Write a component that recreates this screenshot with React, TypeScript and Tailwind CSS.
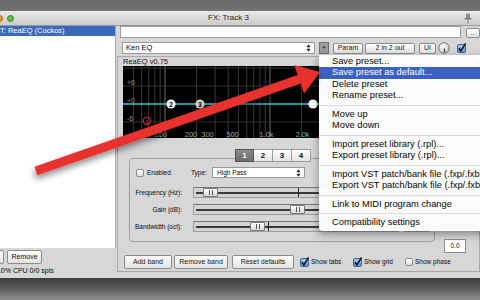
import React from "react";

function UpDown() {
  return (
    <svg width="5" height="8" viewBox="0 0 5 8" className="shrink-0">
      <path d="M2.5 0.3 L4.6 3.2 L0.4 3.2 Z M2.5 7.7 L4.6 4.8 L0.4 4.8 Z" fill="#2a2a2a" />
    </svg>
  );
}

function Btn({ children, className = "" }: { children?: React.ReactNode; className?: string }) {
  return (
    <div
      className={`flex items-center justify-center whitespace-nowrap border border-[#8c8c8c] rounded-[2px] bg-linear-to-b from-[#fefefe] to-[#e3e3e3] text-[#111] ${className}`}
    >
      {children}
    </div>
  );
}

function CheckOn() {
  return (
    <svg width="9" height="9" viewBox="0 0 9 9" className="shrink-0 overflow-visible">
      <defs>
        <linearGradient id="cb" x1="0" y1="0" x2="0" y2="1">
          <stop offset="0" stopColor="#a9cdf5" />
          <stop offset="1" stopColor="#5a93db" />
        </linearGradient>
      </defs>
      <rect x="0.5" y="0.5" width="8" height="8" rx="1.5" fill="url(#cb)" stroke="#3d639e" />
      <path d="M1.8 4.2 L3.9 7 L8.6 -0.6" stroke="#101010" strokeWidth="1.5" fill="none" />
    </svg>
  );
}

function CheckOff() {
  return (
    <div className="w-[8px] h-[8px] shrink-0 rounded-[2px] border border-[#8e8e8e] bg-linear-to-b from-[#ffffff] to-[#e0e0e0]" />
  );
}

function Slider({ thumb, tick }: { thumb: number; tick: number }) {
  return (
    <div className="relative flex-1 h-full border border-[#9c9c9c] border-t-[#777] bg-[#d3d3d3]">
      <div className="absolute left-[2px] right-[2px] top-[4px] h-[2px] bg-[#3a3a3a]" />
      <div className="absolute top-0 bottom-0 w-px bg-[#1e1e1e]" style={{ left: tick }} />
      <div
        className="absolute top-[0px] h-[9px] w-[15px] border border-[#7a7a7a] rounded-[1px] bg-linear-to-b from-[#ffffff] to-[#d8d8d8] flex items-center justify-center gap-[2px]"
        style={{ left: thumb }}
      >
        <div className="w-px h-[5px] bg-[#555]" />
        <div className="w-px h-[5px] bg-[#555]" />
      </div>
    </div>
  );
}

function SliderRow({ label, thumb, tick, mt }: { label: string; thumb: number; tick: number; mt: string }) {
  return (
    <div className={`flex items-center h-[11px] ${mt}`}>
      <div className="w-[46px] flex justify-end whitespace-nowrap text-[6.5px] text-[#0a0a0a]">{label}</div>
      <div className="ml-[11px] flex-1 h-[11px] flex">
        <Slider thumb={thumb} tick={tick} />
      </div>
      <div className="ml-[5px] mr-[4px] w-[26px] h-[11px] bg-white border border-[#999]" />
    </div>
  );
}

const gridFreqs = [50, 60, 70, 80, 90, 100, 200, 300, 400, 500, 600, 700, 800, 900, 1000, 2000, 3000, 4000, 5000, 6000, 7000, 8000, 9000, 10000, 20000];
const major = [100, 1000, 10000];
const fx = (f: number) => 42 + 105 * Math.log10(f / 100);
const fLabels: [number, string][] = [
  [38, "100"],
  [68, "200"],
  [84.5, "300"],
  [109.5, "500"],
  [143.5, "1.0k"],
  [179.5, "2.0k"],
  [219, "5.0k"],
  [250, "10k"],
];

function Graph() {
  return (
    <svg width="346" height="72" viewBox="0 0 346 72" className="block">
      <rect width="346" height="72" fill="#000" />
      {gridFreqs.map((f) => (
        <line key={f} x1={fx(f)} x2={fx(f)} y1="0" y2="72" stroke={major.includes(f) ? "#6c6c6c" : "#3a3a3a"} strokeWidth="1" />
      ))}
      {[2, 20, 56].map((y) => (
        <line key={y} x1="0" x2="346" y1={y} y2={y} stroke="#343434" strokeWidth="1" />
      ))}
      {[
        [17, "+6"],
        [35, "+0"],
        [53, "-6"],
      ].map(([y, t]) => (
        <text key={t as string} x="4" y={(y as number) + 2} fontSize="7" fill="#8c8c8c" fontFamily="Liberation Sans, Arial, sans-serif">
          {t}
        </text>
      ))}
      {fLabels.map(([x, t]) => (
        <text key={t} x={x} y="71" fontSize="7.5" fill="#a0a0a0" textAnchor="middle" fontFamily="Liberation Sans, Arial, sans-serif">
          {t}
        </text>
      ))}
      <line x1="0" x2="346" y1="38" y2="38" stroke="#3cc3cf" strokeWidth="1.6" />
      <circle cx="24" cy="55" r="3.8" fill="none" stroke="#d42a2a" strokeWidth="1" />
      <text x="24" y="57.5" fontSize="6" fill="#d42a2a" textAnchor="middle" fontFamily="Liberation Sans, Arial, sans-serif">1</text>
      <circle cx="48" cy="38" r="4.6" fill="#ffffff" />
      <text x="48" y="40.5" fontSize="7" fontWeight="bold" fill="#000" textAnchor="middle" fontFamily="Liberation Sans, Arial, sans-serif">2</text>
      <circle cx="77" cy="38" r="4.6" fill="#cfcfcf" />
      <text x="77" y="40.5" fontSize="7" fontWeight="bold" fill="#000" textAnchor="middle" fontFamily="Liberation Sans, Arial, sans-serif">3</text>
      <circle cx="190" cy="38" r="4.6" fill="#ffffff" />
    </svg>
  );
}

function Knob() {
  return (
    <svg width="12" height="12" viewBox="0 0 12 12" className="shrink-0">
      <defs>
        <radialGradient id="kn" cx="0.4" cy="0.35" r="0.7">
          <stop offset="0" stopColor="#ffffff" />
          <stop offset="1" stopColor="#c4c4c4" />
        </radialGradient>
      </defs>
      <circle cx="6" cy="6" r="5.3" fill="url(#kn)" stroke="#6e6e6e" strokeWidth="0.9" />
      <line x1="6.2" y1="6.5" x2="6.8" y2="10.6" stroke="#2a2a2a" strokeWidth="1" />
    </svg>
  );
}

const menuItems: (string | null)[] = [
  "Save preset...",
  "Save preset as default...",
  "Delete preset",
  "Rename preset...",
  null,
  "Move up",
  "Move down",
  null,
  "Import preset library (.rpl)...",
  "Export preset library (.rpl)...",
  null,
  "Import VST patch/bank file (.fxp/.fxb)...",
  "Export VST patch/bank file (.fxp/.fxb)...",
  null,
  "Link to MIDI program change",
  null,
  "Compatibility settings",
];

export default function App() {
  return (
    <div className="relative w-[480px] h-[300px] overflow-hidden bg-[#d7d7d7] font-['Liberation_Sans',Arial,sans-serif]">
      {/* top strip */}
      <div className="h-[11px] bg-linear-to-b from-[#666666] to-[#737373]" />
      {/* title bar */}
      <div className="h-[15px] flex items-center bg-linear-to-b from-[#ebebeb] to-[#cbcbcb] border-b border-[#9a9a9a]">
        <div className="-ml-[4px] w-[7px] h-[7px] rounded-full bg-[#e79a33] border border-[#b06a18]" />
        <div className="ml-[4px] w-[7px] h-[7px] rounded-full bg-[#64bf40] border border-[#3b8a22]" />
        <div className="ml-[194px] text-[8px] text-[#1a1a1a] whitespace-nowrap">FX: Track 3</div>
        <div className="flex-1" />
        <svg width="8" height="11" viewBox="0 0 8 11" className="mr-[8px]">
          <rect x="2" y="0.5" width="4" height="5" rx="1" fill="#8a8a8a" />
          <rect x="0.5" y="5" width="7" height="1.4" fill="#7a7a7a" />
          <line x1="4" y1="6" x2="4" y2="10.5" stroke="#777" strokeWidth="1" />
        </svg>
      </div>

      {/* body */}
      <div className="flex h-[252px]">
        {/* left column */}
        <div className="w-[117px] flex flex-col">
          <div className="h-[222px] bg-white border-r border-[#a9a9a9]">
            <div className="h-[10px] bg-[#3b69bd] text-white text-[7.5px] leading-[10px] whitespace-nowrap">T: ReaEQ (Cockos)</div>
          </div>
          <div className="mt-[2px] h-[14px] flex">
            <Btn className="-ml-[1px] w-[5px] h-[14px]" />
            <Btn className="ml-[3px] w-[35px] h-[14px] text-[7px]">Remove</Btn>
          </div>
          <div className="mt-[2px] h-[10px] -ml-[5px] text-[7px] leading-[10px] text-[#0a0a0a] whitespace-nowrap">0.0% CPU 0/0 spls</div>
        </div>

        {/* right column */}
        <div className="ml-[4px] flex-1 flex flex-col">
          <div className="h-[12px] flex">
            <div className="w-[341px] h-[12px] bg-white border border-[#9c9c9c]" />
            <Btn className="ml-[5px] mt-[2px] w-[14px] h-[10px] text-[6px] leading-none">...</Btn>
          </div>

          <div className="mt-[4px] h-[12px] flex items-center pl-[2px] text-[7px]">
            <div className="w-[193px] h-[12px] bg-white border border-[#9a9a9a] flex items-center pl-[3px] pr-[3px] text-[#0a0a0a]">
              <span className="text-[7.5px]">Ken EQ</span>
              <div className="flex-1" />
              <UpDown />
            </div>
            <div className="ml-[4px] w-[10px] h-[12px] bg-[#9b9b9b] border border-[#6f6f6f] flex items-center justify-center text-[8px] text-[#222]">+</div>
            <Btn className="ml-[4px] w-[30px] h-[11px]">Param</Btn>
            <Btn className="ml-[2px] w-[50px] h-[11px]">2 in 2 out</Btn>
            <Btn className="ml-[4px] w-[17px] h-[11px]">UI</Btn>
            <div className="ml-[2px]">
              <Knob />
            </div>
            <div className="ml-[7px]">
              <CheckOn />
            </div>
          </div>

          <div className="mt-[2px] -ml-[3px] h-[216px] border border-[#a8a8a8] flex flex-col">
            <div className="h-[9px] pl-[5px] text-[7.5px] leading-[9px] text-[#1a1a1a] whitespace-nowrap">ReaEQ v0.75</div>
            <div className="ml-[5px] w-[346px] h-[72px]">
              <Graph />
            </div>

            <div className="mt-[11px] flex pl-[11px]">
              <div className="w-[306px] flex flex-col">
                <div className="relative z-10 h-[13px] flex pl-[106px]">
                  {["1", "2", "3", "4"].map((t) => (
                    <div
                      key={t}
                      className={
                        t === "1"
                          ? "w-[19px] h-[13px] flex items-center justify-center bg-linear-to-b from-[#8a8a8a] to-[#6b6b6b] border border-[#555] text-white text-[8px] font-bold"
                          : "w-[19px] h-[13px] flex items-center justify-center bg-linear-to-b from-[#ffffff] to-[#e4e4e4] border border-[#9a9a9a] border-l-0 text-[#111] text-[8px] font-bold"
                      }
                    >
                      {t}
                    </div>
                  ))}
                </div>
                <div className="-mt-[4px] h-[84px] border border-[#a0a0a0] rounded-[4px] flex flex-col pl-[6px]">
                  <div className="mt-[8px] h-[11px] flex items-center text-[6.5px] text-[#0a0a0a]">
                    <div className="w-[55px] flex items-center">
                      <CheckOff />
                      <span className="ml-[3px]">Enabled</span>
                    </div>
                    <span className="w-[21px]">Type:</span>
                    <div className="w-[93px] h-[11px] bg-white border border-[#9a9a9a] flex items-center pl-[4px] pr-[3px]">
                      <span>High Pass</span>
                      <div className="flex-1" />
                      <UpDown />
                    </div>
                  </div>
                  <SliderRow label="Frequency (Hz):" thumb={9} tick={104} mt="mt-[9px]" />
                  <SliderRow label="Gain (dB):" thumb={96} tick={104} mt="mt-[6px]" />
                  <SliderRow label="Bandwidth (oct):" thumb={56} tick={74} mt="mt-[6px]" />
                </div>
              </div>
              <div className="ml-[9px] w-[22px] flex flex-col items-center">
                <div className="mt-[2px] w-[10px] h-[80px] border border-[#999] bg-[#d0d0d0]" />
                <div className="mt-[8px] w-[22px] h-[14px] bg-white border border-[#8f8f8f] flex items-center justify-center text-[6.5px] text-[#111]">
                  0.0
                </div>
              </div>
            </div>

            <div className="mt-[2px] h-[14px] flex items-center pl-[6px] text-[7px] text-[#0a0a0a]">
              <Btn className="w-[48px] h-[14px]">Add band</Btn>
              <Btn className="ml-[2px] w-[54px] h-[14px]">Remove band</Btn>
              <Btn className="ml-[4px] w-[62px] h-[14px]">Reset defaults</Btn>
              <div className="ml-[6px] w-[53px] flex items-center">
                <CheckOn />
                <span className="ml-[2px] text-[6.5px]">Show tabs</span>
              </div>
              <div className="w-[52px] flex items-center">
                <CheckOn />
                <span className="ml-[2px] text-[6.5px]">Show grid</span>
              </div>
              <div className="flex items-center">
                <CheckOff />
                <span className="ml-[2px] text-[6.5px]">Show phase</span>
              </div>
            </div>
          </div>
        </div>
      </div>

      {/* desktop below */}
      <div className="h-[22px] bg-linear-to-b from-[#3c3c3c] via-[#5e5e5e] to-[#8e8e8e]" />

      {/* popup menu */}
      <div className="absolute left-[319px] top-[55px] w-[175px] pt-[0.5px] pb-[2px] bg-[#fbfbfb] rounded-b-[4px] shadow-[0_3px_9px_rgba(0,0,0,0.4)] text-[9.3px] text-[#050505]">
        {menuItems.map((m, i) =>
          m === null ? (
            <div key={i} className="h-[7px] flex items-center">
              <div className="h-px w-full bg-[#dcdcdc]" />
            </div>
          ) : (
            <div
              key={i}
              className={
                m === "Save preset as default..."
                  ? "h-[11.5px] leading-[11.5px] pl-[13px] whitespace-nowrap bg-[#3c60c2] text-white"
                  : "h-[11.5px] leading-[11.5px] pl-[13px] whitespace-nowrap"
              }
            >
              {m}
            </div>
          )
        )}
      </div>

      {/* red arrow */}
      <svg className="absolute left-0 top-0 pointer-events-none" width="480" height="300" viewBox="0 0 480 300">
        <defs>
          <filter id="sh" x="-20%" y="-20%" width="140%" height="160%">
            <feDropShadow dx="-1" dy="4" stdDeviation="3" floodColor="#000" floodOpacity="0.45" />
          </filter>
        </defs>
        <polygon
          points="34.5,166.8 297.7,74.95 294.3,65 320,72 304.1,93.4 300.7,83.45 37.5,175.2"
          fill="#e8312f"
          filter="url(#sh)"
        />
      </svg>
    </div>
  );
}
